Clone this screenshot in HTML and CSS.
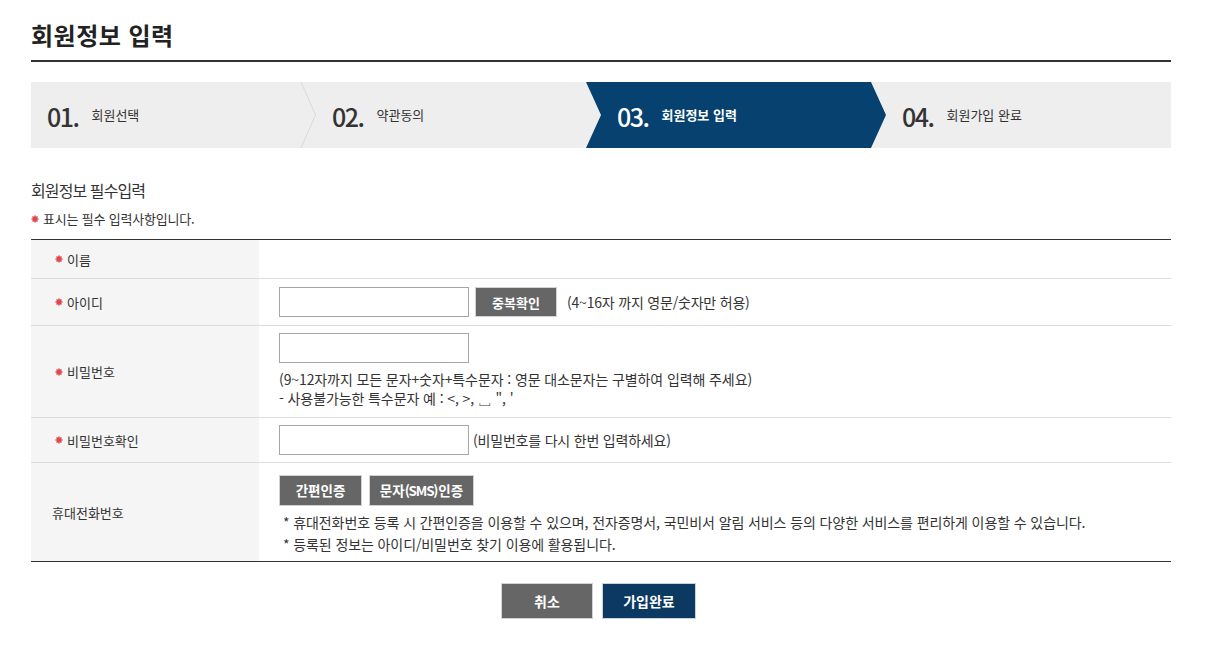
FILE: index.html
```html
<!DOCTYPE html>
<html lang="ko">
<head>
<meta charset="utf-8">
<title>회원정보 입력</title>
<link rel="stylesheet" href="styles.css">
</head>
<body>
<div class="page">
  <h1 class="page-title">회원정보 입력</h1>

  <ol class="steps">
    <li class="step">
      <span class="step-num">01.</span><span class="step-label">회원선택</span>
      <svg class="step-divider" viewBox="0 0 16 66" aria-hidden="true"><path d="M1 0 L15.5 33 L1 66" fill="none" stroke="#d9d9d9" stroke-width="1"/></svg>
    </li>
    <li class="step">
      <span class="step-num">02.</span><span class="step-label">약관동의</span>
    </li>
    <li class="step step-active">
      <span class="step-num">03.</span><span class="step-label">회원정보 입력</span>
    </li>
    <li class="step">
      <span class="step-num">04.</span><span class="step-label">회원가입 완료</span>
    </li>
  </ol>

  <h2 class="section-title">회원정보 필수입력</h2>
  <p class="req-note"><svg class="req" viewBox="0 0 10 10" aria-hidden="true"><path d="M5 0.6V9.4M0.6 5H9.4M1.9 1.9L8.1 8.1M8.1 1.9L1.9 8.1" stroke="#e0474c" stroke-width="2" fill="none"/></svg><span>표시는 필수 입력사항입니다.</span></p>

  <div class="form-table">
    <div class="form-row row-name">
      <div class="form-label"><svg class="req" viewBox="0 0 10 10" aria-hidden="true"><path d="M5 0.6V9.4M0.6 5H9.4M1.9 1.9L8.1 8.1M8.1 1.9L1.9 8.1" stroke="#e0474c" stroke-width="2" fill="none"/></svg><span>이름</span></div>
      <div class="form-value"></div>
    </div>

    <div class="form-row">
      <div class="form-label"><svg class="req" viewBox="0 0 10 10" aria-hidden="true"><path d="M5 0.6V9.4M0.6 5H9.4M1.9 1.9L8.1 8.1M8.1 1.9L1.9 8.1" stroke="#e0474c" stroke-width="2" fill="none"/></svg><span>아이디</span></div>
      <div class="form-value">
        <div class="inline">
          <input class="text-input" type="text">
          <button class="btn btn-check" type="button">중복확인</button>
          <span class="hint hint-after-btn">(4~16자 까지 영문/숫자만 허용)</span>
        </div>
      </div>
    </div>

    <div class="form-row">
      <div class="form-label"><svg class="req" viewBox="0 0 10 10" aria-hidden="true"><path d="M5 0.6V9.4M0.6 5H9.4M1.9 1.9L8.1 8.1M8.1 1.9L1.9 8.1" stroke="#e0474c" stroke-width="2" fill="none"/></svg><span>비밀번호</span></div>
      <div class="form-value value-pw">
        <input class="text-input" type="password">
        <p class="hint-block">(9~12자까지 모든 문자+숫자+특수문자 : 영문 대소문자는 구별하여 입력해 주세요)<br>- 사용불가능한 특수문자 예 : &lt;, &gt;, ␣ ", '</p>
      </div>
    </div>

    <div class="form-row">
      <div class="form-label"><svg class="req" viewBox="0 0 10 10" aria-hidden="true"><path d="M5 0.6V9.4M0.6 5H9.4M1.9 1.9L8.1 8.1M8.1 1.9L1.9 8.1" stroke="#e0474c" stroke-width="2" fill="none"/></svg><span>비밀번호확인</span></div>
      <div class="form-value value-pw2">
        <div class="inline">
          <input class="text-input" type="password">
          <span class="hint hint-after-input">(비밀번호를 다시 한번 입력하세요)</span>
        </div>
      </div>
    </div>

    <div class="form-row">
      <div class="form-label form-label-plain"><span>휴대전화번호</span></div>
      <div class="form-value value-phone">
        <div class="auth-buttons">
          <button class="btn btn-auth btn-auth-simple" type="button">간편인증</button>
          <button class="btn btn-auth btn-auth-sms" type="button">문자<span class="sms">(SMS)</span>인증</button>
        </div>
        <p class="auth-notes">* 휴대전화번호 등록 시 간편인증을 이용할 수 있으며, 전자증명서, 국민비서 알림 서비스 등의 다양한 서비스를 편리하게 이용할 수 있습니다.<br>* 등록된 정보는 아이디/비밀번호 찾기 이용에 활용됩니다.</p>
      </div>
    </div>
  </div>

  <div class="form-actions">
    <button class="btn btn-lg btn-cancel" type="button">취소</button>
    <button class="btn btn-lg btn-submit" type="button">가입완료</button>
  </div>
</div>
</body>
</html>
```

FILE: styles.css
```css
body {
  margin: 0;
  background: #fff;
  color: #333;
  font-family: "Noto Sans CJK KR", "Noto Sans", sans-serif;
}

.page {
  width: 1140px;
  margin-left: 31px;
}

.page-title {
  margin: 0;
  padding: 17px 0 7px;
  font-size: 24px;
  line-height: 36px;
  font-weight: 700;
  letter-spacing: 0.5px;
  color: #222;
  border-bottom: 2px solid #333;
}

/* steps */
.steps {
  list-style: none;
  margin: 20px 0 0;
  padding: 0;
  display: flex;
  height: 66px;
  background: #eeeeee;
}

.step {
  position: relative;
  flex: 1 1 0;
  display: flex;
  align-items: center;
  padding-left: 16px;
}

.step-num {
  position: relative;
  z-index: 1;
  font-size: 25px;
  line-height: 1;
  font-weight: 500;
  letter-spacing: -1.5px;
  color: #333;
  margin-top: 2px;
}

.step-label {
  position: relative;
  z-index: 1;
  margin-left: 13px;
  font-size: 13px;
  line-height: 18px;
  color: #333;
}

.step-active::before {
  content: "";
  position: absolute;
  top: 0;
  bottom: 0;
  left: -15px;
  right: 0;
  background: #06416f;
  clip-path: polygon(0 0, calc(100% - 15px) 0, 100% 50%, calc(100% - 15px) 100%, 0 100%, 15px 50%);
}

.step-active .step-num,
.step-active .step-label {
  color: #fff;
}

.step-active .step-label {
  font-weight: 700;
}

.step-divider {
  position: absolute;
  top: 0;
  right: 0;
  width: 16px;
  height: 66px;
}

/* section heading */
.section-title {
  margin: 30px 0 0;
  font-size: 16px;
  line-height: 24px;
  font-weight: 400;
  letter-spacing: -0.9px;
  color: #333;
}

.req-note {
  margin: 8px 0 11px;
  display: flex;
  align-items: center;
  gap: 4px;
  font-size: 13px;
  line-height: 18px;
  letter-spacing: -0.2px;
}

.req {
  width: 8px;
  height: 8px;
  flex: none;
}

/* form table */
.form-table {
  border-top: 1px solid #333;
  border-bottom: 1px solid #333;
}

.form-row {
  display: flex;
  min-height: 38px;
}

.form-row + .form-row {
  border-top: 1px solid #dcdcdc;
}

.form-label {
  flex: 0 0 228px;
  box-sizing: border-box;
  display: flex;
  align-items: center;
  gap: 4px;
  padding-left: 24px;
  background: #f5f5f5;
  font-size: 13px;
  color: #333;
}

.form-label-plain {
  padding-left: 21px;
}

.form-value {
  flex: 1 1 auto;
  padding: 8px 20px;
  font-size: 14px;
  line-height: 19px;
  color: #333;
}

.row-name .form-value {
  padding: 0;
}

.inline {
  display: flex;
  align-items: center;
}

.text-input {
  box-sizing: border-box;
  display: block;
  width: 190px;
  height: 30px;
  margin: 0;
  padding: 0 6px;
  border: 1px solid #a6a6a6;
  background: #fff;
  font: inherit;
}

.btn {
  box-sizing: border-box;
  margin: 0;
  padding: 0;
  border: 1px solid #d2d2d2;
  color: #fff;
  font-family: inherit;
  font-weight: 700;
  font-size: 13px;
  line-height: 1;
  cursor: pointer;
}

.btn-check {
  width: 82px;
  height: 30px;
  margin-left: 6px;
  background: #666;
}

.hint {
  letter-spacing: -0.2px;
}

.hint-after-btn {
  margin-left: 10px;
}

.hint-after-input {
  margin-left: 4px;
}

.value-pw {
  padding: 7px 20px 9px;
}

.hint-block {
  margin: 7px 0 0;
  line-height: 19px;
  letter-spacing: -0.1px;
}

.value-pw2 {
  padding: 7px 20px 7px;
}

.value-phone {
  padding: 12px 20px 6px;
}

.auth-buttons {
  display: flex;
  gap: 7px;
}

.btn-auth {
  height: 31px;
  background: #666;
  font-size: 13.5px;
}

.btn-auth-simple {
  width: 83px;
}

.btn-auth-sms {
  width: 105px;
}

.sms {
  letter-spacing: -1.2px;
  margin-right: 1px;
}

.auth-notes {
  margin: 5px 0 0;
  padding-left: 4px;
  line-height: 22px;
  letter-spacing: -0.1px;
}

/* bottom buttons */
.form-actions {
  display: flex;
  justify-content: center;
  gap: 9px;
  margin-top: 21px;
  padding-right: 5px;
}

.btn-lg {
  height: 36px;
  font-size: 14px;
}

.btn-cancel {
  width: 92px;
  background: #666;
}

.btn-submit {
  width: 94px;
  background: #0b3962;
  border-color: #c9d3dc;
}
```
